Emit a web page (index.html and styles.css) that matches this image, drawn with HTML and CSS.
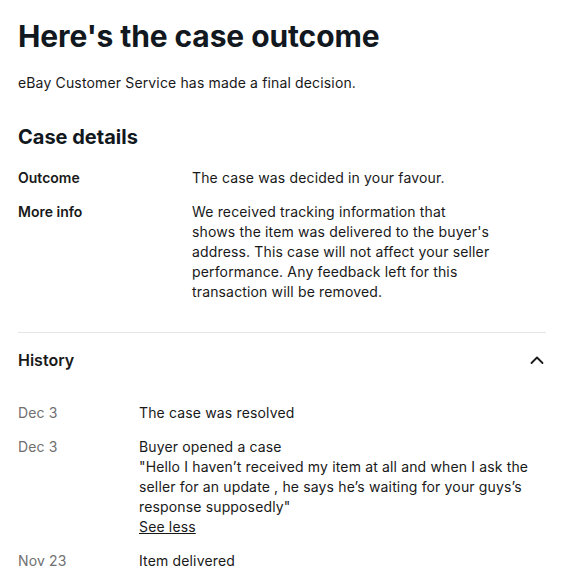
FILE: index.html
```html
<!DOCTYPE html>
<html>
<head>
<meta charset="utf-8">
<link rel="stylesheet" href="styles.css">
</head>
<body>
<main class="page">
  <h1 class="title">Here's the case outcome</h1>
  <p class="subtitle">eBay Customer Service has made a final decision.</p>

  <section class="details">
    <h2 class="section-title">Case details</h2>
    <div class="detail-row">
      <div class="detail-label">Outcome</div>
      <div class="detail-value">The case was decided in your favour.</div>
    </div>
    <div class="detail-row">
      <div class="detail-label">More info</div>
      <div class="detail-value narrow">We received tracking information that shows the item was delivered to the buyer's address. This case will not affect your seller performance. Any feedback left for this transaction will be removed.</div>
    </div>
  </section>

  <section class="history">
    <div class="history-head">
      <h3 class="history-title">History</h3>
      <svg class="chevron" width="16" height="16" viewBox="0 0 16 16"><path d="M2.5 11 L8 5.5 L13.5 11" fill="none" stroke="#191919" stroke-width="1.8" stroke-linecap="round" stroke-linejoin="round"/></svg>
    </div>
    <div class="history-list">
      <div class="history-row">
        <div class="history-date">Dec 3</div>
        <div class="history-text">The case was resolved</div>
      </div>
      <div class="history-row">
        <div class="history-date">Dec 3</div>
        <div class="history-text">Buyer opened a case<br>"Hello I haven’t received my item at all and when I ask the seller for an update , he says he’s waiting for your guys’s response supposedly"<br><a class="see-less" href="#">See less</a></div>
      </div>
      <div class="history-row">
        <div class="history-date">Nov 23</div>
        <div class="history-text">Item delivered</div>
      </div>
    </div>
  </section>
</main>
</body>
</html>
```
FILE: styles.css
```css
* { box-sizing: border-box; }
html, body { margin: 0; padding: 0; background: #fff; }
body {
  font-family: Inter, "Open Sans", "Liberation Sans", sans-serif;
  color: #191919;
  font-size: 14px;
  line-height: 20px;
  letter-spacing: 0.15px;
}
.page {
  padding: 16px 21px 0 18px;
}
.title {
  margin: 0;
  font-size: 30px;
  line-height: 40px;
  font-weight: 700;
  color: #111820;
  letter-spacing: -0.1px;
}
.subtitle {
  margin: 17px 0 0;
}
.details { margin-top: 30px; }
.section-title {
  margin: 0;
  font-size: 20px;
  line-height: 28px;
  font-weight: 700;
  color: #111820;
  letter-spacing: 0;
}
.detail-row {
  display: flex;
  margin-top: 14px;
}
.details .section-title + .detail-row { margin-top: 17px; }
.detail-label {
  width: 174px;
  flex-shrink: 0;
  font-weight: 600;
  letter-spacing: 0;
}
.detail-value.narrow { max-width: 300px; }
.history {
  margin-top: 30px;
  border-top: 1px solid #e5e5e5;
}
.history-head {
  display: flex;
  justify-content: space-between;
  align-items: center;
  padding-top: 15px;
}
.history-title {
  margin: 0;
  font-size: 16px;
  line-height: 24px;
  font-weight: 600;
  letter-spacing: 0;
}
.chevron { margin-right: 1px; }
.history-list { margin-top: 31px; }
.history-row {
  display: flex;
  margin-bottom: 14px;
}
.history-date {
  width: 121px;
  flex-shrink: 0;
  color: #707070;
}
.history-text { flex: 1; }
.see-less { color: #191919; text-decoration: underline; }
```
